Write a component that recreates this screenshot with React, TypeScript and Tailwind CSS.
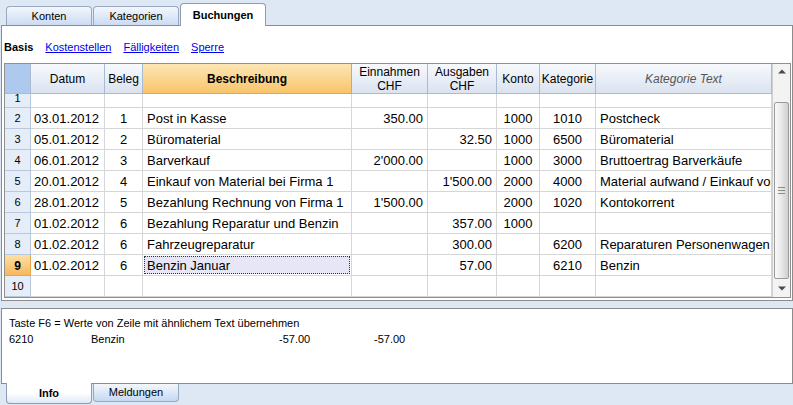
import React from "react";

const FONT = { fontFamily: '"Liberation Sans", Arial, sans-serif' };

type Row = {
  n: string;
  datum: string;
  beleg: string;
  text: string;
  ein: string;
  aus: string;
  konto: string;
  kat: string;
  katText: string;
};

const ROWS: Row[] = [
  { n: "2", datum: "03.01.2012", beleg: "1", text: "Post in Kasse", ein: "350.00", aus: "", konto: "1000", kat: "1010", katText: "Postcheck" },
  { n: "3", datum: "05.01.2012", beleg: "2", text: "Büromaterial", ein: "", aus: "32.50", konto: "1000", kat: "6500", katText: "Büromaterial" },
  { n: "4", datum: "06.01.2012", beleg: "3", text: "Barverkauf", ein: "2'000.00", aus: "", konto: "1000", kat: "3000", katText: "Bruttoertrag Barverkäufe" },
  { n: "5", datum: "20.01.2012", beleg: "4", text: "Einkauf von Material bei Firma 1", ein: "", aus: "1'500.00", konto: "2000", kat: "4000", katText: "Material aufwand / Einkauf von" },
  { n: "6", datum: "28.01.2012", beleg: "5", text: "Bezahlung Rechnung von Firma 1", ein: "1'500.00", aus: "", konto: "2000", kat: "1020", katText: "Kontokorrent" },
  { n: "7", datum: "01.02.2012", beleg: "6", text: "Bezahlung Reparatur und Benzin", ein: "", aus: "357.00", konto: "1000", kat: "", katText: "" },
  { n: "8", datum: "01.02.2012", beleg: "6", text: "Fahrzeugreparatur", ein: "", aus: "300.00", konto: "", kat: "6200", katText: "Reparaturen Personenwagen" },
  { n: "9", datum: "01.02.2012", beleg: "6", text: "Benzin Januar", ein: "", aus: "57.00", konto: "", kat: "6210", katText: "Benzin" },
  { n: "10", datum: "", beleg: "", text: "", ein: "", aus: "", konto: "", kat: "", katText: "" },
];

// grid cell: right + bottom hairline, text nudged 1px down like the original
const cell = "border-r border-b border-[#d6d6d6] overflow-hidden whitespace-nowrap flex items-center pt-px";

function TopTab({ label, active }: { label: string; active?: boolean }) {
  if (active) {
    return (
      <div className="relative z-10 -mb-px w-[86px] h-[23px] rounded-t-[4px] border border-b-0 border-[#8e9bb0] bg-white flex items-center justify-center text-[11px] font-bold text-black">
        {label}
      </div>
    );
  }
  return (
    <div className="w-[86px] h-[19px] rounded-t-[4px] border border-b-0 border-[#98a8c2] bg-gradient-to-b from-[#f4f7fc] to-[#cbdcf3] flex items-center justify-center text-[11px] text-black">
      {label}
    </div>
  );
}

function HeaderCell({ w, children, className = "" }: { w: string; children: React.ReactNode; className?: string }) {
  return (
    <div className={`${w} h-[30px] border-r border-b border-[#a9bbd2] bg-gradient-to-b from-[#f7f9fd] to-[#dbe3ef] flex items-center justify-center text-center text-[12px] leading-[14px] ${className}`}>
      {children}
    </div>
  );
}

function Scrollbar() {
  return (
    <div className="w-[18px] h-full border-l border-[#d0d0d0] bg-[#f3f3f3] flex flex-col items-center">
      <div className="h-[38px] w-full flex items-start justify-center pt-[5px]">
        <svg width="8" height="5" viewBox="0 0 8 5">
          <path d="M0 4.5 L4 0.5 L8 4.5 Z" fill="#4a4a4a" />
        </svg>
      </div>
      <div className="w-[15px] h-[177px] rounded-[2px] border border-[#9c9c9c] bg-gradient-to-r from-[#fafafa] via-[#e8e8e8] to-[#cfcfcf] flex items-center justify-center">
        <div className="flex flex-col gap-[2px]">
          <div className="w-[7px] h-px bg-[#8a8a8a]" />
          <div className="w-[7px] h-px bg-[#8a8a8a]" />
          <div className="w-[7px] h-px bg-[#8a8a8a]" />
        </div>
      </div>
      <div className="flex-1 w-full flex items-center justify-center">
        <svg width="8" height="5" viewBox="0 0 8 5">
          <path d="M0 0.5 L4 4.5 L8 0.5 Z" fill="#4a4a4a" />
        </svg>
      </div>
    </div>
  );
}

function Table() {
  return (
    <div className="ml-[2px] w-[787px] h-[235px] border border-[#8f8f8f] flex bg-white">
      <div className="w-[767px] flex flex-col">
        <div className="flex text-black">
          <div className="w-[26px] h-[30px] border-r border-b border-[#a9bbd2] bg-[#aec9ee]" />
          <HeaderCell w="w-[74px]">Datum</HeaderCell>
          <HeaderCell w="w-[38px]">Beleg</HeaderCell>
          <div className="w-[209px] h-[30px] border-r border-b border-[#f0a23a] bg-gradient-to-b from-[#fde6b4] to-[#f8c46a] flex items-center justify-center text-[12px] font-bold">
            Beschreibung
          </div>
          <HeaderCell w="w-[76px]">
            Einnahmen
            <br />
            CHF
          </HeaderCell>
          <HeaderCell w="w-[69px]">
            Ausgaben
            <br />
            CHF
          </HeaderCell>
          <HeaderCell w="w-[43px]">Konto</HeaderCell>
          <HeaderCell w="w-[56px]">Kategorie</HeaderCell>
          <HeaderCell w="w-[176px]" className="italic text-[#555]">
            Kategorie Text
          </HeaderCell>
        </div>

        {/* row 1 is squeezed, its number only half shows */}
        <div className="flex h-[14px]">
          <div className="w-[26px] h-[14px] border-r border-b border-[#b9c9dd] bg-[#e4edf8] overflow-hidden flex justify-center">
            <span className="text-[11px] leading-[11px] mt-[-1px] text-black">1</span>
          </div>
          <div className={`w-[74px] h-[14px] ${cell}`} />
          <div className={`w-[38px] h-[14px] ${cell}`} />
          <div className={`w-[209px] h-[14px] ${cell}`} />
          <div className={`w-[76px] h-[14px] ${cell}`} />
          <div className={`w-[69px] h-[14px] ${cell}`} />
          <div className={`w-[43px] h-[14px] ${cell}`} />
          <div className={`w-[56px] h-[14px] ${cell}`} />
          <div className={`w-[176px] h-[14px] ${cell}`} />
        </div>

        {ROWS.map((r) => {
          const sel = r.n === "9";
          return (
            <div key={r.n} className="flex h-[21px] text-[13px] text-black">
              {sel ? (
                <div className="w-[26px] h-[21px] border-r border-b border-[#e9a646] bg-gradient-to-b from-[#fde0a6] to-[#f7b75c] flex items-center justify-center pt-px text-[12px] font-bold">
                  {r.n}
                </div>
              ) : (
                <div className="w-[26px] h-[21px] border-r border-b border-[#b9c9dd] bg-[#e4edf8] flex items-center justify-center pt-px text-[11px]">
                  {r.n}
                </div>
              )}
              <div className={`w-[74px] h-[21px] pl-[3px] ${cell}`}>{r.datum}</div>
              <div className={`w-[38px] h-[21px] justify-center ${cell}`}>{r.beleg}</div>
              {sel ? (
                <div className="w-[209px] h-[21px] border-r border-b border-[#d6d6d6] p-px flex">
                  <div className="flex-1 border border-dotted border-[#333] bg-[#e6e6f6] flex items-center pl-[2px] pt-px whitespace-nowrap">
                    {r.text}
                  </div>
                </div>
              ) : (
                <div className={`w-[209px] h-[21px] pl-[4px] ${cell}`}>{r.text}</div>
              )}
              <div className={`w-[76px] h-[21px] justify-end pr-[4px] ${cell}`}>{r.ein}</div>
              <div className={`w-[69px] h-[21px] justify-end pr-[4px] ${cell}`}>{r.aus}</div>
              <div className={`w-[43px] h-[21px] justify-center ${cell}`}>{r.konto}</div>
              <div className={`w-[56px] h-[21px] justify-center ${cell}`}>{r.kat}</div>
              <div className={`w-[176px] h-[21px] pl-[4px] ${cell}`}>{r.katText}</div>
            </div>
          );
        })}
      </div>
      <Scrollbar />
    </div>
  );
}

export default function App() {
  return (
    <div className="w-[793px] h-[405px] bg-[#dee8f4] overflow-hidden flex flex-col" style={FONT}>
      <div className="h-[25px] flex items-end pl-[6px] gap-px">
        <TopTab label="Konten" />
        <TopTab label="Kategorien" />
        <TopTab label="Buchungen" active />
      </div>

      <div className="ml-px w-[792px] h-[276px] border border-[#8c8c8c] bg-white flex flex-col">
        <div className="h-[37px] flex items-start pt-[14px] pl-[2px] gap-[12px] text-[11px] leading-[14px]">
          <span className="font-bold text-black">Basis</span>
          <span className="text-[#0000ee] underline">Kostenstellen</span>
          <span className="text-[#0000ee] underline">Fälligkeiten</span>
          <span className="text-[#0000ee] underline">Sperre</span>
        </div>
        <Table />
      </div>

      <div className="mt-[7px] ml-px w-[792px] h-[76px] border border-[#8c8c8c] bg-white pt-[6px] pl-[7px] text-[11px] leading-[16px] text-black">
        <div>Taste F6 = Werte von Zeile mit ähnlichem Text übernehmen</div>
        <div className="flex">
          <span className="w-[82px]">6210</span>
          <span className="w-[188px]">Benzin</span>
          <span className="w-[95px]">-57.00</span>
          <span>-57.00</span>
        </div>
      </div>

      <div className="flex pl-[6px] gap-px">
        <div className="relative z-10 -mt-px w-[86px] h-[21px] rounded-b-[4px] border border-t-0 border-[#8e9bb0] bg-gradient-to-b from-white via-white to-[#dfe9f7] flex items-center justify-center text-[11px] font-bold text-black">
          Info
        </div>
        <div className="w-[86px] h-[18px] rounded-b-[4px] border border-t-0 border-[#98a8c2] bg-gradient-to-b from-[#f4f7fc] to-[#c6d8f3] flex items-center justify-center text-[11px] text-black">
          Meldungen
        </div>
      </div>
    </div>
  );
}
